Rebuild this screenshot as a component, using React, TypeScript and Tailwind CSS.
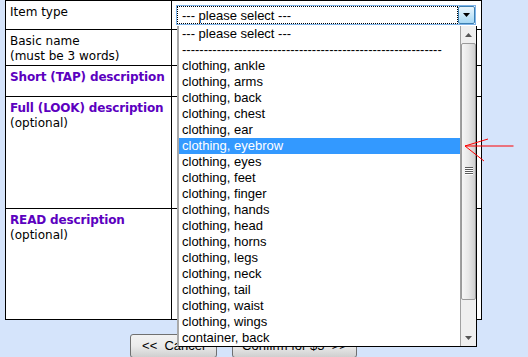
import React from "react";

const items = [
  "clothing, ankle",
  "clothing, arms",
  "clothing, back",
  "clothing, chest",
  "clothing, ear",
  "clothing, eyebrow",
  "clothing, eyes",
  "clothing, feet",
  "clothing, finger",
  "clothing, hands",
  "clothing, head",
  "clothing, horns",
  "clothing, legs",
  "clothing, neck",
  "clothing, tail",
  "clothing, waist",
  "clothing, wings",
  "container, back",
];

const label = "font-['DejaVu_Sans',Verdana,sans-serif] text-[12px] leading-[15px] text-black";
const purple = "whitespace-nowrap font-bold tracking-[-0.15px] text-[#5c00bf]";

function Row({ h, last, left, right }: { h: string; last?: boolean; left: React.ReactNode; right?: React.ReactNode }) {
  return (
    <div className={`flex ${h} ${last ? "" : "border-b border-black"}`}>
      <div className="w-[166px] shrink-0 border-r border-black px-[4px] pt-[4px]">{left}</div>
      <div className="flex-1 px-[4px] pt-[4px]">{right}</div>
    </div>
  );
}

export default function App() {
  return (
    <div className="relative h-[357px] w-[528px] overflow-hidden bg-[#d5e4fb] font-['Liberation_Sans',Arial,sans-serif]">
      <div className={`ml-[5px] w-[477px] border border-black bg-white ${label}`}>
        <Row
          h="h-[29px]"
          left={<div>Item type</div>}
          right={
            <div className="flex h-[20px] w-[300px] border border-[#7eb4ea] bg-white">
              <div className="flex flex-1 items-center border border-dotted border-black pl-[4px] font-['Liberation_Sans',Arial,sans-serif] text-[13px] text-black">
                --- please select ---
              </div>
              <div className="flex w-[17px] items-center justify-center rounded-[2px] border border-[#3c7fb1] bg-gradient-to-b from-[#eaf6fd] to-[#a7d9f5]">
                <svg width="7" height="4" viewBox="0 0 7 4">
                  <path d="M0 0 H7 L3.5 4 Z" fill="#000" />
                </svg>
              </div>
            </div>
          }
        />
        <Row
          h="h-[36px]"
          left={
            <div>
              <div>Basic name</div>
              <div>(must be 3 words)</div>
            </div>
          }
        />
        <Row h="h-[31px]" left={<div className={purple}>Short (TAP) description</div>} />
        <Row
          h="h-[112px]"
          left={
            <div>
              <div className={purple}>Full (LOOK) description</div>
              <div>(optional)</div>
            </div>
          }
        />
        <Row
          h="h-[110px]"
          last
          left={
            <div>
              <div className={purple}>READ description</div>
              <div>(optional)</div>
            </div>
          }
        />
      </div>

      <div className="ml-[5px] mt-[14px] flex w-[477px] justify-center gap-[15px] text-[13px] text-black">
        <div className="flex h-[24px] w-[87px] items-center justify-center whitespace-pre rounded-[3px] border border-[#707070] bg-gradient-to-b from-[#f2f2f2] via-[#ebebeb] to-[#cfcfcf]">
          {"<<  Cancel"}
        </div>
        <div className="flex h-[24px] w-[125px] items-center justify-center whitespace-pre rounded-[3px] border border-[#707070] bg-gradient-to-b from-[#f2f2f2] via-[#ebebeb] to-[#cfcfcf]">
          {"Confirm for $5  >>"}
        </div>
      </div>

      {/* open dropdown list */}
      <div className="absolute left-[177px] top-[26px] flex h-[321px] w-[300px] border-b border-l-2 border-r border-b-black border-l-[#a9a9a9] border-r-black bg-white text-[13px] leading-[16px] text-black">
        <div className="w-[281px]">
          <div className="h-[16px] pl-[3px]">--- please select ---</div>
          <div className="h-[16px] overflow-hidden whitespace-nowrap pl-[3px]">
            {"-".repeat(60)}
          </div>
          {items.map((it) => (
            <div
              key={it}
              className={`h-[16px] pl-[3px] ${it === "clothing, eyebrow" ? "bg-[#3399ff] text-white" : ""}`}
            >
              {it}
            </div>
          ))}
        </div>
        <div className="flex w-[16px] flex-col border-l border-[#a0a0a0] bg-[#efefef]">
          <div className="flex h-[17px] items-center justify-center">
            <svg width="7" height="4" viewBox="0 0 7 4">
              <path d="M0 4 H7 L3.5 0 Z" fill="#555" />
            </svg>
          </div>
          <div className="flex h-[257px] items-center justify-center rounded-[2px] border border-[#9a9a9a] bg-gradient-to-r from-[#f6f6f6] via-[#e8e8e8] to-[#cfcfcf]">
            <svg width="8" height="9" viewBox="0 0 8 9">
              <path d="M0 0.5 H8 M0 2.5 H8 M0 4.5 H8 M0 6.5 H8" stroke="#5a5a5a" strokeWidth="1" />
              <path d="M0 1.5 H8 M0 3.5 H8 M0 5.5 H8 M0 7.5 H8" stroke="#ffffff" strokeWidth="1" />
            </svg>
          </div>
          <div className="flex-1" />
          <div className="flex h-[17px] items-center justify-center">
            <svg width="7" height="4" viewBox="0 0 7 4">
              <path d="M0 0 H7 L3.5 4 Z" fill="#555" />
            </svg>
          </div>
        </div>
      </div>

      {/* red arrow annotation */}
      <svg className="absolute left-[460px] top-[130px]" width="60" height="40" viewBox="0 0 60 40">
        <path d="M5 16 L53.5 16 M5 16 L28 9 M5 16 L24 31" stroke="#ff0000" strokeWidth="1" fill="none" />
      </svg>
    </div>
  );
}
